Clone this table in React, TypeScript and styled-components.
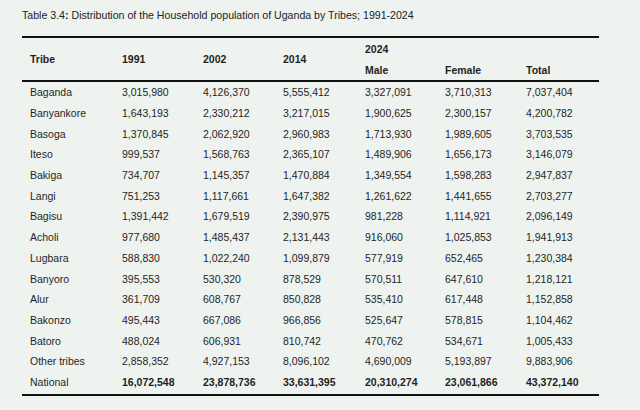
import React from "react";
import styled, { createGlobalStyle } from "styled-components";

const Global = createGlobalStyle`
  html, body { margin: 0; padding: 0; background: #eef3f0; }
  body { font-family: "Liberation Sans", Arial, sans-serif; color: #1f1f1f; }
`;

const Page = styled.div`
  width: 640px;
  height: 410px;
  padding: 9px 0 0 22px;
  box-sizing: border-box;
`;

const Title = styled.div`
  font-size: 10.6px;
  line-height: 13px;
  height: 27px;
  color: #222;
  b { font-weight: 700; }
`;

const Frame = styled.div`
  width: 577px;
  border-top: 2px solid #111;
  border-bottom: 2px solid #111;
  padding-bottom: 2px;
`;

const Table = styled.table`
  width: 577px;
  border-collapse: collapse;
  table-layout: fixed;
  font-size: 10.5px;
`;

const Col = styled.col<{ $w: number }>`
  width: ${(p) => p.$w}px;
`;

const Th = styled.th`
  text-align: left;
  font-weight: 700;
  padding: 0 0 0 8px;
  height: 21px;
  vertical-align: middle;
`;

const HeadRow = styled.tr<{ $last?: boolean }>`
  ${(p) => (p.$last ? "border-bottom: 2px solid #111;" : "")}
`;

const Td = styled.td`
  padding: 0 0 0 8px;
  height: 20.7px;
  vertical-align: middle;
  line-height: 12px;
  font-weight: 400;
  white-space: nowrap;
`;

const Strong = styled.span`
  font-weight: 700;
`;

const rows: string[][] = [
  ["Baganda", "3,015,980", "4,126,370", "5,555,412", "3,327,091", "3,710,313", "7,037,404"],
  ["Banyankore", "1,643,193", "2,330,212", "3,217,015", "1,900,625", "2,300,157", "4,200,782"],
  ["Basoga", "1,370,845", "2,062,920", "2,960,983", "1,713,930", "1,989,605", "3,703,535"],
  ["Iteso", "999,537", "1,568,763", "2,365,107", "1,489,906", "1,656,173", "3,146,079"],
  ["Bakiga", "734,707", "1,145,357", "1,470,884", "1,349,554", "1,598,283", "2,947,837"],
  ["Langi", "751,253", "1,117,661", "1,647,382", "1,261,622", "1,441,655", "2,703,277"],
  ["Bagisu", "1,391,442", "1,679,519", "2,390,975", "981,228", "1,114,921", "2,096,149"],
  ["Acholi", "977,680", "1,485,437", "2,131,443", "916,060", "1,025,853", "1,941,913"],
  ["Lugbara", "588,830", "1,022,240", "1,099,879", "577,919", "652,465", "1,230,384"],
  ["Banyoro", "395,553", "530,320", "878,529", "570,511", "647,610", "1,218,121"],
  ["Alur", "361,709", "608,767", "850,828", "535,410", "617,448", "1,152,858"],
  ["Bakonzo", "495,443", "667,086", "966,856", "525,647", "578,815", "1,104,462"],
  ["Batoro", "488,024", "606,931", "810,742", "470,762", "534,671", "1,005,433"],
  ["Other tribes", "2,858,352", "4,927,153", "8,096,102", "4,690,009", "5,193,897", "9,883,906"],
];

const national = ["National", "16,072,548", "23,878,736", "33,631,395", "20,310,274", "23,061,866", "43,372,140"];

const widths = [92, 81, 80, 82, 80, 81, 81];

export default function App() {
  return (
    <Page>
      <Global />
      <Title>
        Table 3.4<b>:</b> Distribution of the Household population of Uganda by Tribes; 1991-2024
      </Title>
      <Frame>
        <Table>
          <colgroup>
            {widths.map((w, i) => (
              <Col key={i} $w={w} />
            ))}
          </colgroup>
          <thead>
            <HeadRow>
              <Th rowSpan={2}>Tribe</Th>
              <Th rowSpan={2}>1991</Th>
              <Th rowSpan={2}>2002</Th>
              <Th rowSpan={2}>2014</Th>
              <Th colSpan={3}>2024</Th>
            </HeadRow>
            <HeadRow $last>
              <Th>Male</Th>
              <Th>Female</Th>
              <Th>Total</Th>
            </HeadRow>
          </thead>
          <tbody>
            {rows.map((r) => (
              <tr key={r[0]}>
                {r.map((c, i) => (
                  <Td key={i}>{c}</Td>
                ))}
              </tr>
            ))}
            <tr>
              {national.map((c, i) => (
                <Td key={i}>{i > 0 ? <Strong>{c}</Strong> : c}</Td>
              ))}
            </tr>
          </tbody>
        </Table>
      </Frame>
    </Page>
  );
}
